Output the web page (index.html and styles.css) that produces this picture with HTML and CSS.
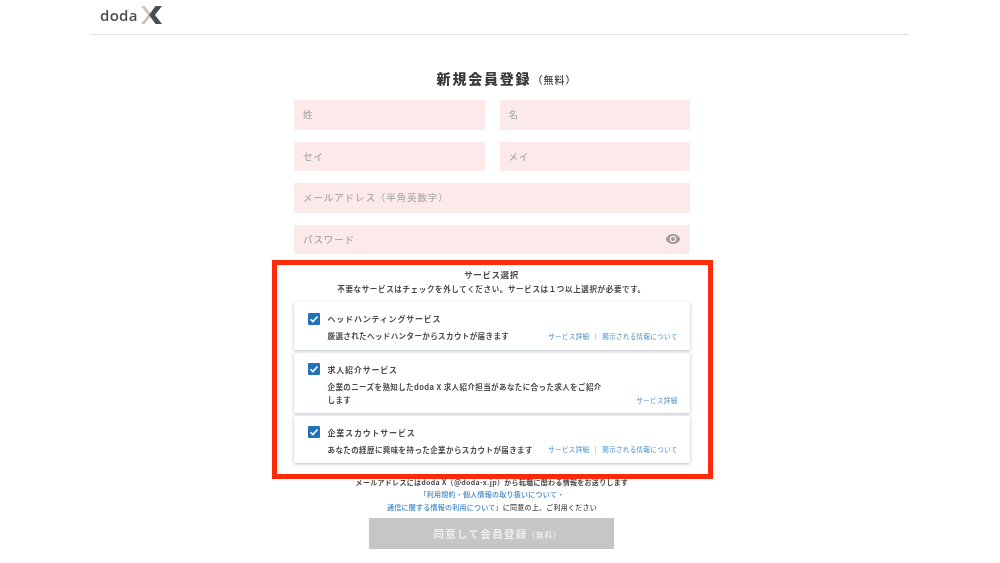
FILE: index.html
```html
<!DOCTYPE html>
<html lang="ja">
<head>
<meta charset="utf-8">
<title>新規会員登録</title>
<link rel="stylesheet" href="styles.css">
</head>
<body>
<div class="page">
  <header class="header">
    <div class="logo">
      <span class="logo-text">doda</span>
      <svg class="logo-x" width="21" height="18" viewBox="0 0 21 18" aria-hidden="true">
        <path d="M0 0h3.500l7.500 9-7.500 9H0l7-9z" fill="#cfc3be"/>
        <path d="M21 0h-6.500L8 9l6.500 9H21l-7-9z" fill="#4a4d52"/>
      </svg>
    </div>
  </header>
  <main class="main">
    <h1 class="title">新規会員登録<span class="title-sub">（無料）</span></h1>
    <div class="fields">
      <div class="row">
        <div class="field">姓</div>
        <div class="field">名</div>
      </div>
      <div class="row">
        <div class="field">セイ</div>
        <div class="field">メイ</div>
      </div>
      <div class="field">メールアドレス（半角英数字）</div>
      <div class="field field-password">
        <span>パスワード</span>
        <svg width="16" height="16" viewBox="0 0 24 24" aria-hidden="true"><path fill="#9a9a9a" d="M12 4.500C7 4.500 2.700 7.600 1 12c1.700 4.400 6 7.500 11 7.500s9.300-3.100 11-7.500c-1.700-4.400-6-7.500-11-7.500zM12 17a5 5 0 1 1 0-10 5 5 0 0 1 0 10zm0-8a3 3 0 1 0 0 6 3 3 0 0 0 0-6z"/></svg>
      </div>
    </div>
    <section class="services">
      <h2 class="services-title">サービス選択</h2>
      <p class="services-note">不要なサービスはチェックを外してください。サービスは１つ以上選択が必要です。</p>
      <div class="cards">
        <article class="card">
          <div class="card-head">
            <span class="check"><svg width="12" height="12" viewBox="0 0 12 12" aria-hidden="true"><path d="M2.500 6.200l2.400 2.400 4.600-5" fill="none" stroke="#fff" stroke-width="1.500"/></svg></span>
            <span class="card-name">ヘッドハンティングサービス</span>
          </div>
          <div class="card-body">
            <p class="card-desc">厳選されたヘッドハンターからスカウトが届きます</p>
            <div class="links"><a class="link">サービス詳細</a><i class="sep"></i><a class="link">開示される情報について</a></div>
          </div>
        </article>
        <article class="card card-tall">
          <div class="card-head">
            <span class="check"><svg width="12" height="12" viewBox="0 0 12 12" aria-hidden="true"><path d="M2.500 6.200l2.400 2.400 4.600-5" fill="none" stroke="#fff" stroke-width="1.500"/></svg></span>
            <span class="card-name">求人紹介サービス</span>
          </div>
          <div class="card-body">
            <p class="card-desc card-desc-wrap">企業のニーズを熟知したdoda X 求人紹介担当があなたに合った求人をご紹介します</p>
            <div class="links"><a class="link">サービス詳細</a></div>
          </div>
        </article>
        <article class="card card-short">
          <div class="card-head">
            <span class="check"><svg width="12" height="12" viewBox="0 0 12 12" aria-hidden="true"><path d="M2.500 6.200l2.400 2.400 4.600-5" fill="none" stroke="#fff" stroke-width="1.500"/></svg></span>
            <span class="card-name">企業スカウトサービス</span>
          </div>
          <div class="card-body">
            <p class="card-desc">あなたの経歴に興味を持った企業からスカウトが届きます</p>
            <div class="links"><a class="link">サービス詳細</a><i class="sep"></i><a class="link">開示される情報について</a></div>
          </div>
        </article>
      </div>
    </section>
    <p class="mail-note">メールアドレスにはdoda X（@doda-x.jp）から転職に関わる情報をお送りします</p>
    <p class="terms"><a class="terms-link">「利用規約・個人情報の取り扱いについて・</a><br><a class="terms-link">通信に関する情報の利用について」</a>に同意の上、ご利用ください</p>
    <button class="submit" type="button">同意して会員登録<span class="submit-sub">（無料）</span></button>
  </main>
</div>
</body>
</html>
```
FILE: styles.css
```css
* { box-sizing: border-box; }
html, body { margin: 0; padding: 0; background: #fff; }
body {
  width: 1000px;
  height: 563px;
  overflow: hidden;
  font-family: "Noto Sans CJK JP", "Noto Sans", sans-serif;
  color: #3a3a3a;
}
.page { filter: blur(0.5px); }
p, h1, h2 { margin: 0; }
.header {
  width: 819px;
  height: 35px;
  margin: 0 0 0 90px;
  border-bottom: 1px solid #e2e2e2;
  padding: 5px 0 0 10px;
}
.logo { display: flex; align-items: center; gap: 3px; height: 19px; }
.logo-text {
  font-family: "Open Sans", sans-serif;
  font-size: 15px;
  font-weight: 600;
  letter-spacing: 0.300px;
  line-height: 20px;
  color: #4b4d50;
}
.main { width: 984px; display: flex; flex-direction: column; align-items: center; padding-top: 31px; }
.title {
  height: 24px;
  margin-bottom: 1px;
  margin-left: 29px;
  font-size: 14px;
  font-weight: 900;
  line-height: 24px;
  letter-spacing: 1.800px;
  color: #3a3a3a;
}
.title-sub { font-size: 10px; font-weight: 500; letter-spacing: 1px; margin-left: 1px; }
.fields { width: 396px; display: flex; flex-direction: column; gap: 12px; margin-top: 9px; }
.row { display: flex; gap: 15px; }
.row .field { flex: 1; }
.field {
  height: 29.500px;
  background: #fce9ea;
  padding-left: 9px;
  font-size: 9.500px;
  font-weight: 500;
  letter-spacing: 0.900px;
  line-height: 29px;
  color: #adadad;
}
.field-password { display: flex; justify-content: space-between; align-items: center; padding-right: 9px; }
.services {
  width: 441px;
  height: 218.500px;
  margin-top: 6px;
  border: 5px solid #ff2a0a;
  padding: 3px 18px 0 17px;
  text-align: center;
}
.services-title { font-size: 8.500px; font-weight: 700; line-height: 13px; letter-spacing: 0.600px; color: #4a4a4a; }
.services-note { font-size: 7.500px; font-weight: 700; line-height: 13px; letter-spacing: 0.650px; color: #4a4a4a; margin-top: 1px; }
.cards { display: flex; flex-direction: column; gap: 2.500px; margin-top: 7px; }
.card {
  height: 48px;
  background: #fff;
  box-shadow: 0 1px 3px rgba(90, 110, 140, 0.45);
  padding: 10px 12px 0 14px;
  text-align: left;
}
.card-tall { height: 60.500px; }
.card-short { height: 47.500px; }
.card-head { display: flex; align-items: center; gap: 8px; height: 13px; }
.check {
  width: 12px;
  height: 12px;
  background: #2272bb;
  border-radius: 1px;
  display: flex;
  align-items: center;
  justify-content: center;
}
.card-name { font-size: 8px; font-weight: 700; letter-spacing: 0.800px; color: #4a4a4a; line-height: 13px; }
.card-body { display: flex; justify-content: space-between; align-items: flex-end; padding-left: 20px; margin-top: 4px; }
.card-desc { font-size: 7.500px; font-weight: 700; letter-spacing: 0.400px; line-height: 13.500px; color: #4a4a4a; white-space: nowrap; }
.card-desc-wrap { width: 276px; white-space: normal; }
.links { display: flex; align-items: center; line-height: 13px; }
.link { font-size: 6.500px; letter-spacing: 0.350px; color: #4a8fc9; white-space: nowrap; }
.sep { width: 1px; height: 7px; background: #c9d4dc; margin: 0 6px; }
.mail-note { font-size: 7px; font-weight: 700; line-height: 10px; letter-spacing: 0.300px; color: #4a4a4a; margin-top: -2px; }
.terms { font-size: 7px; font-weight: 500; line-height: 13px; letter-spacing: 0.250px; color: #4a4a4a; text-align: center; margin-top: 1px; }
.terms-link { color: #3d86c4; }
.submit {
  width: 245px;
  height: 31px;
  margin-top: 4px;
  margin-left: -1px;
  padding: 0 0 0 12px;
  background: #c6c6c6;
  border: none;
  color: #eeeeee;
  font-family: inherit;
  font-size: 10.500px;
  font-weight: 700;
  letter-spacing: 1.300px;
}
.submit-sub { font-size: 7.500px; font-weight: 500; letter-spacing: 1px; }
```
